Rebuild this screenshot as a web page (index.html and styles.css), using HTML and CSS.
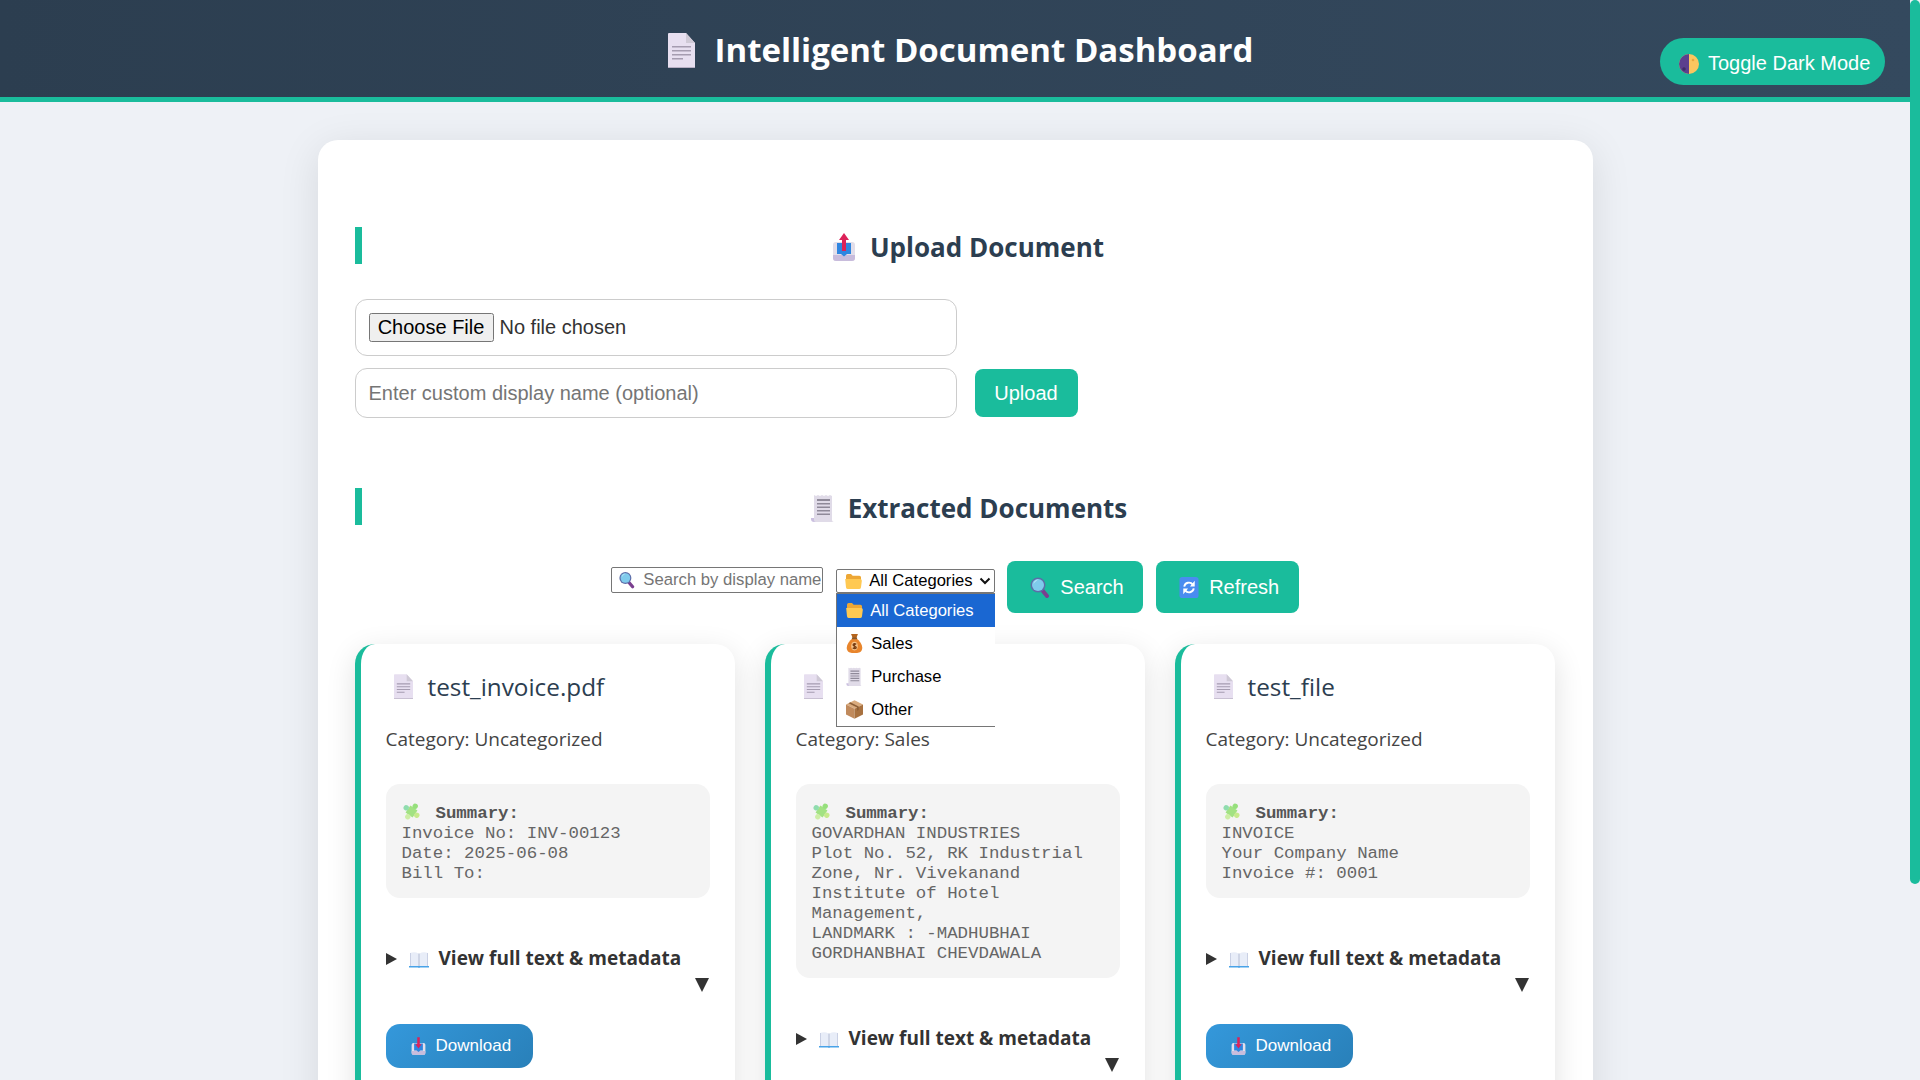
FILE: index.html
```html
<!DOCTYPE html>
<html>
<head>
    <meta charset="UTF-8">
    <title>Intelligent Document Dashboard</title>
    <link rel="stylesheet" href="styles.css">
</head>
<body>
    <!-- icons used all over the page -->
    <svg class="sprite">
        <symbol id="i-doc" viewBox="0 0 27 35">
            <path fill="#e7dff0" d="M1 0H18L27 10V34a1 1 0 0 1-1 1H1a1 1 0 0 1-1-1V1a1 1 0 0 1 1-1z"/>
            <path fill="#cfc9d6" d="M18 0L27 10H18z"/>
            <path fill="#b8afc4" d="M0 34h27v1H0z"/>
            <path fill="#a59cb0" d="M4 13h19v1.5H4zM4 17h19v1.5H4zM4 21h19v1.5H4zM4 25h11v1.5H4z"/>
        </symbol>
        <symbol id="i-out" viewBox="0 0 24 28">
            <rect x="1" y="9" width="22" height="19" rx="3" fill="#e2deea"/>
            <path fill="#c8bcdc" d="M1 22h22v3a3 3 0 0 1-3 3H4a3 3 0 0 1-3-3z"/>
            <path fill="#2f86e0" d="M5 10h14v11h-4l-3 2.5L9 21H5z"/>
            <path fill="#dc2259" d="M12 0l5 7h-3v11h-4V7H7z"/>
        </symbol>
        <symbol id="i-in" viewBox="0 0 24 28">
            <rect x="1" y="9" width="22" height="19" rx="3" fill="#e2deea"/>
            <path fill="#c8bcdc" d="M1 22h22v3a3 3 0 0 1-3 3H4a3 3 0 0 1-3-3z"/>
            <path fill="#2f86e0" d="M5 10h14v11h-4l-3 2.5L9 21H5z"/>
            <path fill="#dc2259" d="M12 18l-5-7h3V0h4v11h3z"/>
        </symbol>
        <symbol id="i-receipt" viewBox="0 0 24 28">
            <path fill="#cbc0e0" d="M0 24h18v4H3a3 3 0 0 1-3-3z"/>
            <path fill="#e0dbe8" d="M3 1l2 1 2-1 2 1 2-1 2 1 2-1 2 1 2-1 2 1v24a2 2 0 0 0 2 2H5a2 2 0 0 1-2-2z"/>
            <path fill="#8f8a99" d="M6 5h13v2H6zM6 9h13v1.5H6zM6 12.500h13V14H6zM6 16h13v1.500H6zM6 19.500h13V21H6z"/>
        </symbol>
        <symbol id="i-search" viewBox="0 0 20 21">
            <path stroke="#7a3f8f" stroke-width="4" stroke-linecap="round" d="M12.500 13.500L17 19"/>
            <circle cx="8" cy="8" r="7.500" fill="#5d6da8"/>
            <circle cx="8" cy="8" r="6" fill="#7fcbec"/>
            <path fill="#b9e6f7" d="M3.500 7a5 5 0 0 1 5-4.500c-2 1-3.500 2.500-5 4.500z"/>
        </symbol>
        <symbol id="i-folder" viewBox="0 0 20 18">
            <path fill="#eda735" d="M1 2a2 2 0 0 1 2-2h4l2 2h8a2 2 0 0 1 2 2v4H1z"/>
            <path fill="#ffc952" d="M0 6h18a2 2 0 0 1 2 2l-1 8a2 2 0 0 1-2 2H3a2 2 0 0 1-2-2z"/>
        </symbol>
        <symbol id="i-bag" viewBox="0 0 18 22">
            <path fill="#b5651d" d="M5 0h8l-2 5H7z"/>
            <path fill="#e8852c" d="M7 5h4c4 3 7 7 7 11 0 4-3 6-6 6H6c-3 0-6-2-6-6 0-4 3-8 7-11z"/>
            <rect x="6" y="4" width="6" height="2" fill="#8a5a2b"/>
            <ellipse cx="9" cy="14" rx="3.800" ry="5" fill="#f6c48a"/>
            <path stroke="#7a3d12" stroke-width="1.500" fill="none" d="M9 10.500v7M11 12c-2-1.500-4-.5-3.500 1s3.500 1 3.500 2.500-2.500 2-4 .5"/>
        </symbol>
        <symbol id="i-box" viewBox="0 0 20 22">
            <path fill="#d9ab7e" d="M10 0l10 5-10 5L0 5z"/>
            <path fill="#c08a5c" d="M0 5l10 5v12L0 17z"/>
            <path fill="#a8713f" d="M20 5L10 10v12l10-5z"/>
            <path fill="#8d5f38" d="M5 2.500l10 5v4l-2 1v-4L3 3.500z"/>
        </symbol>
        <symbol id="i-refresh" viewBox="0 0 20 22">
            <rect width="20" height="22" rx="3" fill="#4a8cf0"/>
            <path stroke="#fff" stroke-width="2" fill="none" d="M5 10a5 5 0 0 1 9-2M15 12a5 5 0 0 1-9 2"/>
            <path fill="#fff" d="M16 4v6h-5zM4 18v-6h5z"/>
        </symbol>
        <symbol id="i-puzzle" viewBox="0 0 20 20">
            <g transform="rotate(35 10 10)">
                <rect x="5.500" y="5.500" width="9" height="9" fill="#a2e283"/>
                <circle cx="10" cy="3.200" r="2.800" fill="#96e07c"/>
                <circle cx="16.800" cy="10" r="2.800" fill="#c6ea8c"/>
                <circle cx="3.200" cy="10" r="2.800" fill="#8fdcae"/>
                <circle cx="10" cy="16.800" r="2.800" fill="#cdeea6"/>
            </g>
        </symbol>
        <symbol id="i-book" viewBox="0 0 20 16">
            <path fill="#4aa3e8" d="M0 14h20v1.500H11l-1 .5-1-.5H0z"/>
            <path fill="#e8edf8" d="M1 1c3-1 6-1 8.500.5V14H1zM19 1c-3-1-6-1-8.500.5V14H19z"/>
            <path fill="#a9b4cf" d="M1 1h.5v13H1zM18.500 1h.5v13h-.5zM9.500 1.500h1V14h-1z"/>
        </symbol>
        <symbol id="i-moon" viewBox="0 0 20 20">
            <circle cx="10" cy="10" r="10" fill="#fbc65f"/>
            <path fill="#5c3f8e" d="M10 0a10 10 0 0 0 0 20z"/>
            <circle cx="5" cy="15" r="1.800" fill="#3f2b66"/>
            <circle cx="14" cy="6" r="1.300" fill="#e8a63f"/>
        </symbol>
        <symbol id="i-chev" viewBox="0 0 12 8">
            <path stroke="#111" stroke-width="2" fill="none" d="M1.500 1.500L6 6l4.500-4.500"/>
        </symbol>
    </svg>

    <div class="scroll-thumb"></div>

    <header class="topbar">
        <h1 class="title"><svg class="ico ico-title"><use href="#i-doc"/></svg><span>Intelligent Document Dashboard</span></h1>
        <button type="button" class="toggle"><svg class="ico ico-moon"><use href="#i-moon"/></svg>Toggle Dark Mode</button>
    </header>

    <main class="container">
        <h2 class="section-title"><svg class="ico ico-out"><use href="#i-out"/></svg>Upload Document</h2>
        <form class="upload">
            <input type="file" class="file-input">
            <div class="upload-row">
                <input type="text" class="name-input" placeholder="Enter custom display name (optional)">
                <button type="button" class="btn btn-upload">Upload</button>
            </div>
        </form>

        <h2 class="section-title section-docs"><svg class="ico ico-receipt"><use href="#i-receipt"/></svg>Extracted Documents</h2>
        <div class="toolbar">
            <label class="search-box">
                <svg class="ico ico-sm"><use href="#i-search"/></svg>
                <input type="text" class="search-input" placeholder="Search by display name">
            </label>
            <div class="select-wrap">
                <div class="select-box">
                    <svg class="ico ico-folder"><use href="#i-folder"/></svg>
                    <span>All Categories</span>
                    <svg class="chev"><use href="#i-chev"/></svg>
                </div>
                <ul class="dropdown">
                    <li class="active"><svg class="ico ico-folder"><use href="#i-folder"/></svg>All Categories</li>
                    <li><svg class="ico ico-opt"><use href="#i-bag"/></svg>Sales</li>
                    <li><svg class="ico ico-opt"><use href="#i-receipt"/></svg>Purchase</li>
                    <li><svg class="ico ico-opt"><use href="#i-box"/></svg>Other</li>
                </ul>
            </div>
            <button type="button" class="btn btn-tool"><svg class="ico ico-btn"><use href="#i-search"/></svg>Search</button>
            <button type="button" class="btn btn-tool"><svg class="ico ico-btn"><use href="#i-refresh"/></svg>Refresh</button>
        </div>

        <div class="cards">
            <article class="card">
                <h3 class="card-title"><svg class="ico ico-card"><use href="#i-doc"/></svg>test_invoice.pdf</h3>
                <p class="category">Category: Uncategorized</p>
                <div class="summary"><svg class="ico ico-puzzle"><use href="#i-puzzle"/></svg><strong>Summary:</strong>
Invoice No: INV-00123
Date: 2025-06-08
Bill To:</div>
                <details class="more">
                    <summary><svg class="ico ico-book"><use href="#i-book"/></svg>View full text &amp; metadata</summary>
                </details>
                <a class="download"><svg class="ico ico-dl"><use href="#i-in"/></svg>Download</a>
            </article>

            <article class="card">
                <h3 class="card-title"><svg class="ico ico-card"><use href="#i-doc"/></svg></h3>
                <p class="category">Category: Sales</p>
                <div class="summary"><svg class="ico ico-puzzle"><use href="#i-puzzle"/></svg><strong>Summary:</strong>
GOVARDHAN INDUSTRIES
Plot No. 52, RK Industrial
Zone, Nr. Vivekanand
Institute of Hotel
Management,
LANDMARK : -MADHUBHAI
GORDHANBHAI CHEVDAWALA</div>
                <details class="more">
                    <summary><svg class="ico ico-book"><use href="#i-book"/></svg>View full text &amp; metadata</summary>
                </details>
                <a class="download"><svg class="ico ico-dl"><use href="#i-in"/></svg>Download</a>
            </article>

            <article class="card">
                <h3 class="card-title"><svg class="ico ico-card"><use href="#i-doc"/></svg>test_file</h3>
                <p class="category">Category: Uncategorized</p>
                <div class="summary"><svg class="ico ico-puzzle"><use href="#i-puzzle"/></svg><strong>Summary:</strong>
INVOICE
Your Company Name
Invoice #: 0001</div>
                <details class="more">
                    <summary><svg class="ico ico-book"><use href="#i-book"/></svg>View full text &amp; metadata</summary>
                </details>
                <a class="download"><svg class="ico ico-dl"><use href="#i-in"/></svg>Download</a>
            </article>
        </div>
    </main>
</body>
</html>
```
FILE: styles.css
```css
* {
    box-sizing: border-box;
}
body {
    margin: 0 10px 0 0;
    background-color: #eef1f6;
    font-family: "Open Sans", sans-serif;
    color: #333;
}
.sprite {
    display: none;
}
.ico {
    flex: none;
    display: inline-block;
}
/* the page scrollbar, teal thumb on the window edge */
.scroll-thumb {
    position: fixed;
    top: 0;
    right: 0;
    width: 10px;
    height: 884px;
    border-radius: 6px;
    background: #1abc9c;
}

/* top bar */
.topbar {
    position: relative;
    height: 102px;
    padding-left: 11px;
    border-bottom: 5px solid #1abc9c;
    background: linear-gradient(90deg, #2c3e50, #34495e);
    display: flex;
    justify-content: center;
    align-items: flex-start;
}
.title {
    margin: 24px 0 0 0;
    display: flex;
    align-items: center;
    color: #fff;
    font-size: 33px;
    font-weight: 700;
    line-height: 52px;
}
.ico-title {
    width: 27px;
    height: 35px;
    margin-right: 20px;
}
.toggle {
    position: absolute;
    top: 38px;
    right: 25px;
    width: 225px;
    height: 47px;
    display: flex;
    align-items: center;
    padding: 4px 0 0 19px;
    border: none;
    border-radius: 24px;
    background: #1abc9c;
    color: #fff;
    font-family: "Liberation Sans", Arial, sans-serif;
    font-size: 20px;
}
.ico-moon {
    width: 20px;
    height: 20px;
    margin-right: 9px;
}

/* main white panel */
.container {
    width: 1275px;
    margin: 38px auto 124px auto;
    padding: 87px 37px 37px 37px;
    background: #fff;
    border-radius: 20px;
    box-shadow: 0 8px 40px rgba(0, 0, 0, 0.1);
}
.section-title {
    margin: 0 0 35px 0;
    height: 37px;
    border-left: 7px solid #1abc9c;
    display: flex;
    justify-content: center;
    align-items: center;
    padding: 2px 0 0 19px;
    color: #2c3e50;
    font-size: 26px;
    font-weight: 700;
}
.section-docs {
    margin-top: 70px;
    margin-bottom: 36px;
    padding-left: 21px;
}
.ico-out {
    width: 24px;
    height: 28px;
    margin-right: 14px;
}
.ico-receipt {
    width: 24px;
    height: 28px;
    margin-right: 13px;
}

/* upload form */
.upload input {
    font-family: "Liberation Sans", Arial, sans-serif;
    font-size: 20px;
}
.file-input {
    display: block;
    width: 602px;
    height: 57px;
    padding: 13px;
    margin-bottom: 12px;
    border: 1px solid #ccc;
    border-radius: 12px;
    background: #fff;
}
.file-input::file-selector-button {
    width: 125px;
    height: 29px;
    margin-right: 6px;
    padding: 0;
}
.upload-row {
    display: flex;
    align-items: center;
    gap: 18px;
}
.name-input {
    width: 602px;
    height: 50px;
    padding: 0 13px;
    border: 1px solid #ccc;
    border-radius: 12px;
}
.btn {
    display: flex;
    align-items: center;
    justify-content: center;
    border: none;
    border-radius: 8px;
    background: #1abc9c;
    color: #fff;
    font-family: "Liberation Sans", Arial, sans-serif;
    font-size: 20px;
}
.btn-upload {
    width: 103px;
    height: 48px;
}

/* search row */
.toolbar {
    height: 52px;
    margin-bottom: 31px;
    display: flex;
    justify-content: center;
    gap: 13px;
    font-family: "Liberation Sans", Arial, sans-serif;
    font-size: 16px;
}
.search-box {
    width: 212px;
    height: 26px;
    margin-top: 6px;
    display: flex;
    align-items: center;
    padding: 0 1px 0 7px;
    border: 1px solid #767676;
    border-radius: 2px;
    background: #fff;
}
.ico-sm {
    width: 16px;
    height: 18px;
    margin-right: 8px;
}
.search-input {
    flex: 1;
    min-width: 0;
    border: none;
    outline: none;
    padding: 0;
    background: none;
    font-family: "Liberation Sans", Arial, sans-serif;
    font-size: 16.7px;
}
.select-wrap {
    position: relative;
    width: 159px;
    height: 24px;
    margin: 8px -1px 0 0;
}
.select-box {
    height: 24px;
    display: flex;
    align-items: center;
    padding-left: 8px;
    border: 1px solid #767676;
    border-radius: 2px;
    background: #fff;
    color: #000;
    font-size: 16.6px;
}
.ico-folder {
    width: 17px;
    height: 15px;
    margin-right: 7px;
}
.chev {
    width: 12px;
    height: 8px;
    margin-left: 6px;
}
.dropdown {
    position: absolute;
    z-index: 5;
    top: 24px;
    left: 0;
    width: 159px;
    margin: 0;
    padding: 0;
    list-style: none;
    border-left: 1px solid #767676;
    border-top: 1px solid #767676;
    border-bottom: 1px solid #767676;
    background: #fff;
    color: #000;
    font-size: 16.6px;
}
.dropdown li {
    height: 33px;
    display: flex;
    align-items: center;
    padding-left: 9px;
}
.dropdown li.active {
    background: #1a67d2;
    color: #fff;
}
.ico-opt {
    width: 17px;
    height: 19px;
    margin-right: 8px;
}
.btn-tool {
    height: 52px;
    padding: 0 19.5px 0 23px;
}
.ico-btn {
    width: 20px;
    height: 21px;
    margin-right: 10px;
}

/* document cards */
.cards {
    display: grid;
    grid-template-columns: repeat(3, 380px);
    gap: 30px;
}
.card {
    padding: 25px;
    border-left: 6px solid #1abc9c;
    border-radius: 20px;
    background: #fff;
    box-shadow: 0 8px 30px rgba(0, 0, 0, 0.12);
}
.card-title {
    margin: -1px 0 22px 0;
    display: flex;
    align-items: center;
    height: 36px;
    color: #2c3e50;
    font-size: 24.3px;
    font-weight: 400;
}
.ico-card {
    width: 19px;
    height: 25px;
    margin: 0 15px 0 8px;
}
.category {
    margin: 0 0 32px 0;
    height: 26px;
    line-height: 26px;
    font-size: 19px;
    color: #444;
}
.summary {
    padding: 18px 16px 14px 16px;
    border-radius: 14px;
    background: #f4f4f4;
    color: #666;
    font-family: "Liberation Mono", "Courier New", monospace;
    font-size: 17.4px;
    line-height: 20px;
    white-space: pre-wrap;
    margin-bottom: 47px;
}
.summary strong {
    color: #555;
}
.ico-puzzle {
    width: 19px;
    height: 19px;
    margin-right: 15px;
    vertical-align: -3px;
}
.more summary {
    position: relative;
    padding-left: 23px;
    list-style: none;
    font-size: 19px;
    font-weight: 700;
    line-height: 27px;
    color: #333;
}
/* closed arrow in front of the line */
.more summary::before {
    content: "";
    position: absolute;
    left: 0;
    top: 8px;
    border-left: 11px solid #333;
    border-top: 6px solid transparent;
    border-bottom: 6px solid transparent;
}
/* second arrow, right side under the line */
.more summary::after {
    content: "";
    display: block;
    width: 0;
    height: 14px;
    margin: 6px 1px 7px auto;
    border-left: 7.5px solid transparent;
    border-right: 7.5px solid transparent;
    border-top: 14px solid #333;
}
.ico-book {
    width: 20px;
    height: 16px;
    margin-right: 10px;
    vertical-align: -3px;
}
.download {
    display: inline-flex;
    align-items: center;
    width: 147px;
    height: 44px;
    margin-top: 11px;
    padding-left: 25px;
    border-radius: 14px;
    background: linear-gradient(135deg, #3498db, #2980b9);
    color: #fff;
    font-family: "Liberation Sans", Arial, sans-serif;
    font-size: 17px;
}
.ico-dl {
    width: 15px;
    height: 18px;
    margin-right: 10px;
}
```
